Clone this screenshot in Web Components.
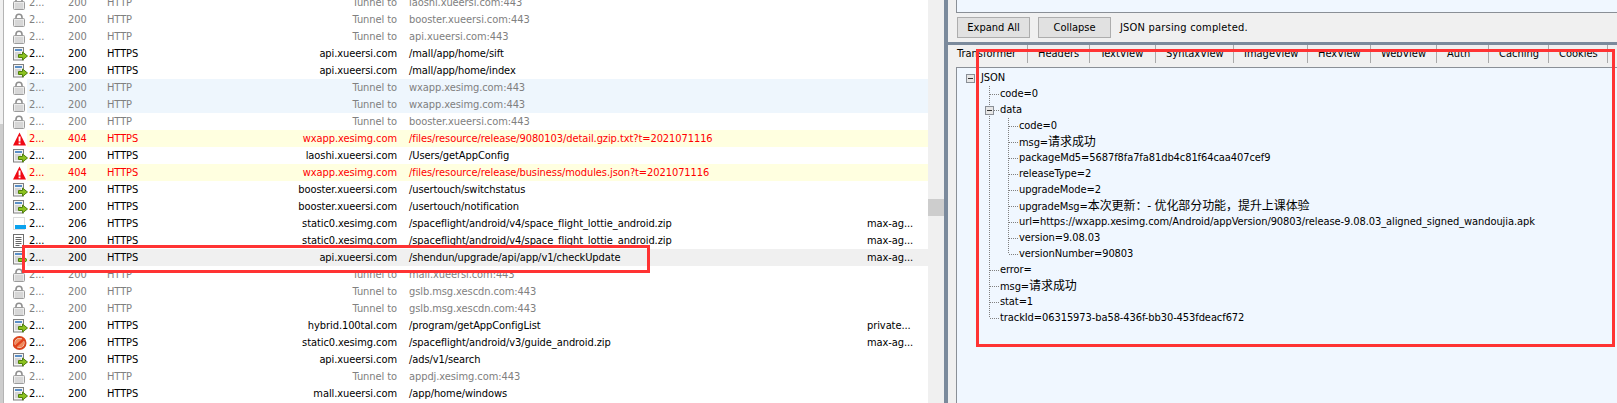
<!DOCTYPE html>
<html>
<head>
<meta charset="utf-8">
<style>
  html, body { margin: 0; height: 100%; overflow: hidden; background: #fff; }
  body { font: 11px "DejaVu Sans Condensed", "Noto Sans CJK SC", sans-serif; letter-spacing: -0.08px; }
  .zh { font-size: 12px; }
</style>
</head>
<body>
<app-shell>
  <session-list slot="left">
    <session-row icon="lock" kind="tunnel" num="2..." result="200" proto="HTTP" host="Tunnel to" url="laoshi.xueersi.com:443"></session-row>
    <session-row icon="lock" kind="tunnel" num="2..." result="200" proto="HTTP" host="Tunnel to" url="booster.xueersi.com:443"></session-row>
    <session-row icon="lock" kind="tunnel" num="2..." result="200" proto="HTTP" host="Tunnel to" url="api.xueersi.com:443"></session-row>
    <session-row icon="go" num="2..." result="200" proto="HTTPS" host="api.xueersi.com" url="/mall/app/home/sift"></session-row>
    <session-row icon="go" num="2..." result="200" proto="HTTPS" host="api.xueersi.com" url="/mall/app/home/index"></session-row>
    <session-row icon="lock" kind="tunnel blue" num="2..." result="200" proto="HTTP" host="Tunnel to" url="wxapp.xesimg.com:443"></session-row>
    <session-row icon="lock" kind="tunnel blue" num="2..." result="200" proto="HTTP" host="Tunnel to" url="wxapp.xesimg.com:443"></session-row>
    <session-row icon="lock" kind="tunnel" num="2..." result="200" proto="HTTP" host="Tunnel to" url="booster.xueersi.com:443"></session-row>
    <session-row icon="warn" kind="error" num="2..." result="404" proto="HTTPS" host="wxapp.xesimg.com" url="/files/resource/release/9080103/detail.gzip.txt?t=2021071116"></session-row>
    <session-row icon="go" num="2..." result="200" proto="HTTPS" host="laoshi.xueersi.com" url="/Users/getAppConfig"></session-row>
    <session-row icon="warn" kind="error" num="2..." result="404" proto="HTTPS" host="wxapp.xesimg.com" url="/files/resource/release/business/modules.json?t=2021071116"></session-row>
    <session-row icon="go" num="2..." result="200" proto="HTTPS" host="booster.xueersi.com" url="/usertouch/switchstatus"></session-row>
    <session-row icon="go" num="2..." result="200" proto="HTTPS" host="booster.xueersi.com" url="/usertouch/notification"></session-row>
    <session-row icon="partial" num="2..." result="206" proto="HTTPS" host="static0.xesimg.com" url="/spaceflight/android/v4/space_flight_lottie_android.zip" cache="max-ag..."></session-row>
    <session-row icon="doc" num="2..." result="200" proto="HTTPS" host="static0.xesimg.com" url="/spaceflight/android/v4/space_flight_lottie_android.zip" cache="max-ag..."></session-row>
    <session-row icon="go" kind="selected" num="2..." result="200" proto="HTTPS" host="api.xueersi.com" url="/shendun/upgrade/api/app/v1/checkUpdate" cache="max-ag..."></session-row>
    <session-row icon="lock" kind="tunnel" num="2..." result="200" proto="HTTP" host="Tunnel to" url="mall.xueersi.com:443"></session-row>
    <session-row icon="lock" kind="tunnel" num="2..." result="200" proto="HTTP" host="Tunnel to" url="gslb.msg.xescdn.com:443"></session-row>
    <session-row icon="lock" kind="tunnel" num="2..." result="200" proto="HTTP" host="Tunnel to" url="gslb.msg.xescdn.com:443"></session-row>
    <session-row icon="go" num="2..." result="200" proto="HTTPS" host="hybrid.100tal.com" url="/program/getAppConfigList" cache="private..."></session-row>
    <session-row icon="block" num="2..." result="206" proto="HTTPS" host="static0.xesimg.com" url="/spaceflight/android/v3/guide_android.zip" cache="max-ag..."></session-row>
    <session-row icon="go" num="2..." result="200" proto="HTTPS" host="api.xueersi.com" url="/ads/v1/search"></session-row>
    <session-row icon="lock" kind="tunnel" num="2..." result="200" proto="HTTP" host="Tunnel to" url="appdj.xesimg.com:443"></session-row>
    <session-row icon="go" num="2..." result="200" proto="HTTPS" host="mall.xueersi.com" url="/app/home/windows"></session-row>
  </session-list>
  <inspector-pane slot="right">
    <tree-row guides="root">JSON</tree-row>
    <tree-row guides="_ t">code=0</tree-row>
    <tree-row guides="_ box">data</tree-row>
    <tree-row guides="_ v t">code=0</tree-row>
    <tree-row guides="_ v t">msg=<span class="zh">请求成功</span></tree-row>
    <tree-row guides="_ v t">packageMd5=5687f8fa7fa81db4c81f64caa407cef9</tree-row>
    <tree-row guides="_ v t">releaseType=2</tree-row>
    <tree-row guides="_ v t">upgradeMode=2</tree-row>
    <tree-row guides="_ v t">upgradeMsg=<span class="zh">本次更新：- 优化部分功能，提升上课体验</span></tree-row>
    <tree-row guides="_ v t">url=https://wxapp.xesimg.com/Android/appVersion/90803/release-9.08.03_aligned_signed_wandoujia.apk</tree-row>
    <tree-row guides="_ v t">version=9.08.03</tree-row>
    <tree-row guides="_ v l">versionNumber=90803</tree-row>
    <tree-row guides="_ t">error=</tree-row>
    <tree-row guides="_ t">msg=<span class="zh">请求成功</span></tree-row>
    <tree-row guides="_ t">stat=1</tree-row>
    <tree-row guides="_ l">trackId=06315973-ba58-436f-bb30-453fdeacf672</tree-row>
  </inspector-pane>
</app-shell>

<script>
// icons for the session list, 15x14 box
const ICONS = {
  lock: `<path d="M3 6V4.2a3 3 0 0 1 6 0V6" fill="none" stroke="#8f8f8f" stroke-width="1.6"/>
    <rect x="0.5" y="5.5" width="11" height="8" rx="1" fill="#ececec" stroke="#9c9c9c"/>
    <path d="M2 8h8M2 10h8M2 12h8" stroke="#c2c2c2"/>`,
  go: `<rect x="0.5" y="0.5" width="10" height="12.5" fill="#f4f4f4" stroke="#808080"/>
    <path d="M2 3h7" stroke="#5b8fc7" stroke-width="2"/>
    <path d="M2 6h6M2 8h3M2 10h3" stroke="#b5b5b5"/>
    <path d="M5.5 7.5h4V5l5 4-5 4v-2.5h-4z" fill="#8cc21f" stroke="#4f7f0c"/>`,
  warn: `<path d="M6.5 0.5 13 13.5H0z" fill="#f00a14"/>
    <path d="M5.6 4.5h1.9v5H5.6zM5.6 10.4h1.9v1.8H5.6z" fill="#fff"/>`,
  partial: `<rect x="0.5" y="0.5" width="11" height="12" fill="none" stroke="#b8b8b8" stroke-dasharray="1 1"/>
    <rect x="2" y="8" width="11" height="4" fill="#0aa2ee"/>`,
  doc: `<rect x="0.5" y="0.5" width="10" height="13" fill="#fff" stroke="#6f6f6f"/>
    <path d="M2.5 3.5h6M2.5 5.5h6M2.5 7.5h6M2.5 9.5h6M2.5 11.5h4" stroke="#666"/>`,
  block: `<circle cx="6.5" cy="7" r="6" fill="#f7f7f7" stroke="#d9431c" stroke-width="2"/>
    <circle cx="6.5" cy="7" r="4.6" fill="#f08a5c"/>
    <path d="M2.3 10.6 10.7 3.4" stroke="#e2401a" stroke-width="2.4"/>`
};

class AppShell extends HTMLElement {
  constructor() {
    super();
    this.attachShadow({ mode: 'open' });
    this.shadowRoot.innerHTML = `
      <style>
        :host { display: flex; height: 403px; width: 1617px; position: relative; overflow: hidden; }
        .left { width: 944px; flex: none; }
        .split { width: 4px; flex: none; background: #7b8a9c; }
        .right { flex: 1; min-width: 0; }
        /* red marks drawn on top of the screenshot */
        .mark { position: absolute; border: 3px solid #ff3333; box-sizing: border-box; pointer-events: none; }
        .m1 { left: 22px; top: 245px; width: 628px; height: 28px; }
        .m2 { left: 976px; top: 49px; width: 639px; height: 298px; border-width: 3.5px; }
      </style>
      <div class="left"><slot name="left"></slot></div>
      <div class="split"></div>
      <div class="right"><slot name="right"></slot></div>
      <div class="mark m1"></div>
      <div class="mark m2"></div>
    `;
  }
}

class SessionList extends HTMLElement {
  constructor() {
    super();
    this.attachShadow({ mode: 'open' });
    this.shadowRoot.innerHTML = `
      <style>
        :host { display: flex; height: 403px; overflow: hidden; background: #fff; }
        .edge { width: 3px; flex: none; border-right: 1px solid #b4b4b4; display: flex; flex-direction: column; background: #f0f0f0; }
        .edge i { height: 124px; flex: none; }
        .edge b { flex: 1; background: #cdcdcd; }
        .rows { width: 924px; flex: none; margin-top: -6px; }
        .bar { flex: 1; background: #f0f0f0; display: flex; flex-direction: column; }
        .before { height: 199px; }
        .thumb { height: 17px; background: #cdcdcd; }
      </style>
      <div class="edge"><i></i><b></b></div>
      <div class="rows"><slot></slot></div>
      <div class="bar"><div class="before"></div><div class="thumb"></div></div>
    `;
  }
}

class SessionRow extends HTMLElement {
  constructor() {
    super();
    this.attachShadow({ mode: 'open' });
  }

  connectedCallback() {
    const a = n => this.getAttribute(n) || '';
    const kinds = a('kind').split(' ');
    let bg = 'transparent', color = '#000';
    if (kinds.includes('tunnel')) color = '#808080';
    if (kinds.includes('blue')) bg = '#eef6fd';
    if (kinds.includes('error')) { bg = '#ffffe0'; color = '#ff0000'; }
    if (kinds.includes('selected')) bg = '#f0f0f0';
    this.shadowRoot.innerHTML = `
      <style>
        :host { display: flex; height: 17px; line-height: 17px; white-space: nowrap; }
        .icon { width: 23px; flex: none; display: flex; justify-content: flex-end; align-items: center; }
        svg { display: block; margin-right: -1px; }
        .cells { flex: 1; display: grid; grid-template-columns: 39px 39px 93px 201px 466px 1fr; background: ${bg}; color: ${color}; }
        span { padding-left: 2px; overflow: hidden; }
        .host { text-align: right; padding: 0 2px 0 0; }
        .url { padding-left: 10px; }
      </style>
      <div class="icon"><svg width="15" height="14" viewBox="0 0 15 14">${ICONS[a('icon')]}</svg></div>
      <div class="cells">
        <span>${a('num')}</span><span>${a('result')}</span><span>${a('proto')}</span>
        <span class="host">${a('host')}</span><span class="url">${a('url')}</span><span>${a('cache')}</span>
      </div>
    `;
  }
}

class InspectorPane extends HTMLElement {
  constructor() {
    super();
    this.attachShadow({ mode: 'open' });
    const tabs = ['Transformer', 'Headers', 'TextView', 'SyntaxView', 'ImageView', 'HexView', 'WebView', 'Auth', 'Caching', 'Cookies'];
    this.shadowRoot.innerHTML = `
      <style>
        :host { display: flex; flex-direction: column; height: 403px; background: #f0f0f0; }
        .top { height: 12px; margin-left: 8px; background: #f0f7ff; border: solid #8a8f96; border-width: 0 0 1px 1px; }
        .tools { height: 29px; margin-left: 9px; display: flex; align-items: center; gap: 8px; }
        button { font: inherit; letter-spacing: 0; width: 73px; height: 21px; padding: 0; background: #e1e1e1; border: 1px solid #adadad; color: #000; }
        .msg { margin-left: 1px; letter-spacing: 0.2px; }
        .sash { height: 3px; background: #7b8a9c; }
        .tabs { height: 22px; padding-left: 8px; letter-spacing: 0; display: grid; grid-template-columns: 72px 62px 66px 78px 74px 63px 66px 52px 60px 59px; }
        .tab { height: 18px; line-height: 18px; padding-left: 10px; border-right: 1px solid #a9a9a9; }
        .tab:first-child { padding-left: 1px; }
        .tree { flex: 1; margin-left: 8px; padding: 2px 0 0 4px; background: #f0f7ff; border: solid #8a8f96; border-width: 1px 0 0 1px; }
      </style>
      <div class="top"></div>
      <div class="tools">
        <button>Expand All</button><button>Collapse</button><span class="msg">JSON parsing completed.</span>
      </div>
      <div class="sash"></div>
      <div class="tabs">${tabs.map(t => `<div class="tab">${t}</div>`).join('')}</div>
      <div class="tree"><slot></slot></div>
    `;
  }
}

class TreeRow extends HTMLElement {
  constructor() {
    super();
    this.attachShadow({ mode: 'open' });
  }

  connectedCallback() {
    const guides = (this.getAttribute('guides') || '').split(' ');
    const cells = guides.map(g => {
      const box = g === 'box' || g === 'root';
      return `<i class="g ${g === '_' ? '' : g}">${box ? '<b></b>' : ''}</i>`;
    }).join('');
    this.shadowRoot.innerHTML = `
      <style>
        :host { display: flex; height: 16px; line-height: 16px; white-space: nowrap; }
        .g { width: 19px; height: 16px; flex: none; position: relative; display: block; }
        .g.v::before, .g.t::before, .g.l::before, .g.box::before {
          content: ''; position: absolute; left: 9px; top: 0; bottom: 0; width: 1px;
          background: repeating-linear-gradient(#808080 0 1px, transparent 1px 2px);
        }
        .g.l::before { bottom: 8px; }
        .g.t::after, .g.l::after, .g.box::after {
          content: ''; position: absolute; left: 10px; top: 8px; width: 9px; height: 1px;
          background: repeating-linear-gradient(90deg, #808080 0 1px, transparent 1px 2px);
        }
        b { position: absolute; left: 5px; top: 4px; width: 7px; height: 7px; border: 1px solid #8a8f96; background: #e6e6e6; z-index: 1; }
        b::after { content: ''; position: absolute; left: 1px; top: 3px; width: 5px; height: 1px; background: #333; }
        .txt { padding-left: 1px; }
      </style>
      ${cells}<span class="txt"><slot></slot></span>
    `;
  }
}

customElements.define('app-shell', AppShell);
customElements.define('session-list', SessionList);
customElements.define('session-row', SessionRow);
customElements.define('inspector-pane', InspectorPane);
customElements.define('tree-row', TreeRow);
</script>
</body>
</html>
